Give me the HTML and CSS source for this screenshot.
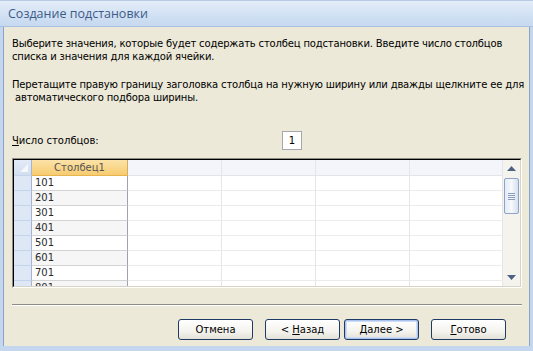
FILE: index.html
```html
<!DOCTYPE html>
<html lang="ru">
<head>
  <meta charset="UTF-8" />
  <title>Создание подстановки</title>
  <link rel="stylesheet" href="styles.css">
</head>
<body>
  <div class="window">
    <div class="titlebar">Создание подстановки</div>
    <div class="content">
      <p class="hint">Выберите значения, которые будет содержать столбец подстановки. Введите число столбцов<br>списка и значения для каждой ячейки.</p>
      <p class="hint">Перетащите правую границу заголовка столбца на нужную ширину или дважды щелкните ее для<br>&nbsp;автоматического подбора ширины.</p>

      <div class="cols-row">
        <span class="cols-label"><u>Ч</u>исло столбцов:</span>
        <span class="cols-input">1</span>
      </div>

      <div class="grid-frame">
        <div class="grid-inner">
          <div class="sheet">
            <div class="row head">
              <div class="sel corner"><span class="tri"></span></div>
              <div class="cell col1">Столбец1</div>
              <div class="cell"></div><div class="cell"></div><div class="cell"></div><div class="cell"></div>
            </div>
            <div class="row"><div class="sel"></div><div class="cell col1">101</div><div class="cell"></div><div class="cell"></div><div class="cell"></div><div class="cell"></div></div>
            <div class="row alt"><div class="sel"></div><div class="cell col1">201</div><div class="cell"></div><div class="cell"></div><div class="cell"></div><div class="cell"></div></div>
            <div class="row"><div class="sel"></div><div class="cell col1">301</div><div class="cell"></div><div class="cell"></div><div class="cell"></div><div class="cell"></div></div>
            <div class="row alt"><div class="sel"></div><div class="cell col1">401</div><div class="cell"></div><div class="cell"></div><div class="cell"></div><div class="cell"></div></div>
            <div class="row"><div class="sel"></div><div class="cell col1">501</div><div class="cell"></div><div class="cell"></div><div class="cell"></div><div class="cell"></div></div>
            <div class="row alt"><div class="sel"></div><div class="cell col1">601</div><div class="cell"></div><div class="cell"></div><div class="cell"></div><div class="cell"></div></div>
            <div class="row"><div class="sel"></div><div class="cell col1">701</div><div class="cell"></div><div class="cell"></div><div class="cell"></div><div class="cell"></div></div>
            <div class="row alt"><div class="sel"></div><div class="cell col1">801</div><div class="cell"></div><div class="cell"></div><div class="cell"></div><div class="cell"></div></div>
          </div>
          <div class="vscroll">
            <div class="arrow">
              <svg width="9" height="5" viewBox="0 0 9 5"><path d="M0 5 L4.5 0 L9 5 Z" fill="#4d6185"/></svg>
            </div>
            <div class="thumb"><span></span><span></span><span></span><span></span></div>
            <div class="track"></div>
            <div class="arrow">
              <svg width="9" height="5" viewBox="0 0 9 5"><path d="M0 0 L4.5 5 L9 0 Z" fill="#4d6185"/></svg>
            </div>
          </div>
        </div>
      </div>

      <div class="divider"></div>

      <div class="buttons">
        <button class="btn">Отмена</button>
        <button class="btn">&lt; <u>Н</u>азад</button>
        <button class="btn focus"><u>Д</u>алее &gt;</button>
        <button class="btn"><u>Г</u>отово</button>
      </div>
    </div>
  </div>
</body>
</html>
```

FILE: styles.css
```css
body {
  margin: 0;
  padding: 0;
  background: #c4d7ef;
  font-family: "DejaVu Sans", sans-serif;
  font-size: 10px;
  color: #000;
}

.window {
  width: 533px;
  height: 351px;
  display: flex;
  flex-direction: column;
  box-sizing: border-box;
  background: #c4d7ef;
  padding: 0 3px 5px 3px;
}

.titlebar {
  height: 27px;
  margin: 0 -3px;
  padding-left: 8px;
  box-sizing: border-box;
  display: flex;
  align-items: center;
  font-family: "Open Sans", sans-serif;
  font-size: 12.5px;
  color: #3e5b88;
  background: linear-gradient(#e4edf9, #d3e2f4 50%, #c6d9f0);
  border-top: 1px solid #b9cbe4;
  border-bottom: 1px solid #aac0de;
}

.content {
  flex: 1;
  background: #ece9d8;
  border-left: 1px solid #8aa4c8;
  border-right: 1px solid #8aa4c8;
  padding: 10px 8px 0 8px;
  display: flex;
  flex-direction: column;
}

.hint {
  margin: 0 0 15px 0;
  line-height: 13px;
  letter-spacing: -0.16px;
  white-space: nowrap;
}

.cols-row {
  display: flex;
  align-items: center;
  margin-top: 12px;
  height: 19px;
}

.cols-label {
  width: 270px;
}

.cols-input {
  width: 18px;
  height: 17px;
  background: #fff;
  border: 1px solid #a7a6aa;
  display: flex;
  align-items: center;
  justify-content: center;
}

.grid-frame {
  margin-top: 8px;
  width: 510px;
  height: 130px;
  box-sizing: border-box;
  border: 1px solid;
  border-color: #8e8c84 #fff #fff #8e8c84;
}

.grid-inner {
  height: 100%;
  box-sizing: border-box;
  border: 1px solid;
  border-color: #000 #d8d4c4 #d8d4c4 #000;
  display: flex;
  background: #fff;
}

.sheet {
  flex: 1;
  overflow: hidden;
}

.row {
  display: grid;
  grid-template-columns: 18px 96px 94px 94px 94px 1fr;
  height: 15px;
}

.row.head {
  height: 16px;
}

.sel {
  background: #dde7f5;
  border-right: 1px solid #a5b5cf;
  border-bottom: 1px solid #c6d4e9;
}

.corner {
  position: relative;
  background: linear-gradient(#e3ebf7, #d2def0);
}

.tri {
  position: absolute;
  right: 3px;
  bottom: 3px;
  width: 0;
  height: 0;
  border-left: 8px solid transparent;
  border-bottom: 8px solid #f4f7fc;
}

.cell {
  border-right: 1px solid #e6e6e6;
  border-bottom: 1px solid #ececec;
  background: #fff;
}

.head .cell {
  background: #f3f5fb;
  border-bottom-color: #e2e4ea;
}

.cell.col1 {
  border-right: 1px solid #9ca3ad;
  border-bottom: 1px solid #d3d3d3;
  padding-left: 3px;
  line-height: 14px;
  color: #2b2b2b;
}

.alt .cell.col1 {
  background: #f6f6f6;
}

.head .cell.col1 {
  background: linear-gradient(#fbe2a8, #f7cc70);
  border-bottom: 1px solid #e6b451;
  border-right: 1px solid #d8ad55;
  text-align: center;
  padding-left: 0;
  line-height: 15px;
  color: #555;
}

.vscroll {
  width: 17px;
  display: flex;
  flex-direction: column;
  background: #f4f3ee;
}

.arrow {
  height: 17px;
  display: flex;
  align-items: center;
  justify-content: center;
}

.thumb {
  margin: 1px 1px 0 1px;
  height: 36px;
  box-sizing: border-box;
  border: 1px solid #8fa3c5;
  border-radius: 2px;
  background: linear-gradient(90deg, #e4ebf7, #f6f8fc 50%, #d6e0f0);
  display: flex;
  flex-direction: column;
  align-items: center;
  justify-content: center;
  gap: 1px;
}

.thumb span {
  width: 7px;
  height: 1px;
  background: #8a9cbb;
}

.track {
  flex: 1;
}

.divider {
  margin-top: 16px;
  width: 510px;
  border-top: 1px solid #8e8c84;
  border-bottom: 1px solid #fff;
}

.buttons {
  display: flex;
  margin-top: 13px;
  padding-left: 166px;
}

.btn {
  width: 75px;
  height: 21px;
  margin-right: 4px;
  font-family: "DejaVu Sans", sans-serif;
  font-size: 10px;
  color: #000;
  background: linear-gradient(#ffffff, #f4f3ee 60%, #e3e1d7);
  border: 1px solid #1f3b64;
  border-radius: 3px;
  padding: 0;
}

.btn:first-child {
  margin-right: 12px;
}

.btn:nth-child(3) {
  margin-right: 12px;
}

.btn.focus {
  box-shadow: inset 0 0 0 1px #a9c4ee, inset 0 0 0 2px #cfdcf4;
}
```
